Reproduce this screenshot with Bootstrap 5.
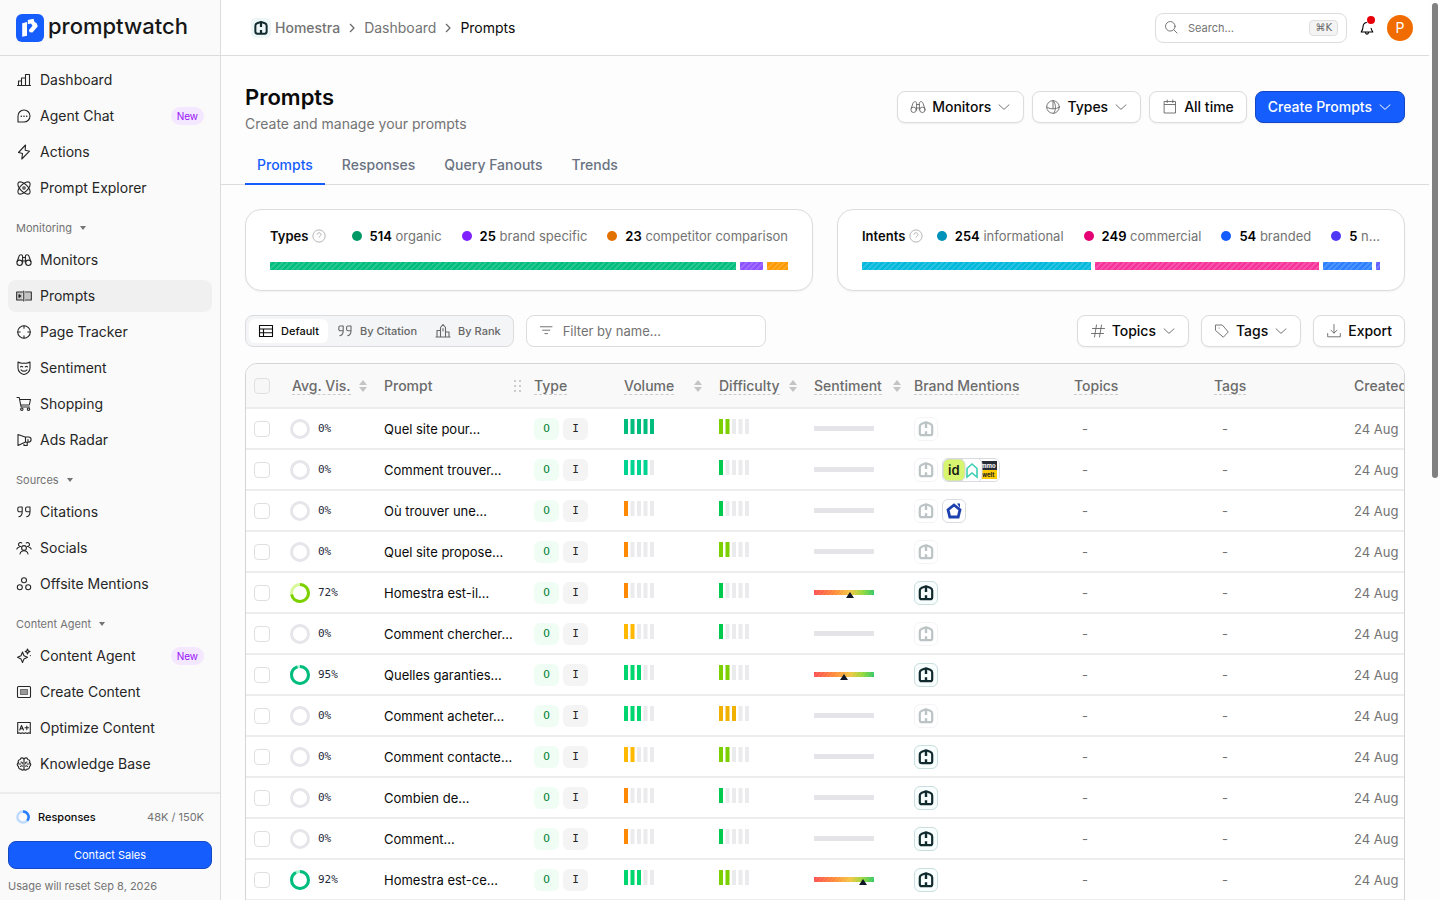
<!DOCTYPE html>
<html lang="en">
<head>
<meta charset="utf-8">
<meta name="viewport" content="width=device-width, initial-scale=1">
<title>Prompts - promptwatch</title>
<link href="https://cdn.jsdelivr.net/npm/bootstrap@5.3.0/dist/css/bootstrap.min.css" rel="stylesheet">
<style>
  :root { --line:#dcdcde; --muted:#737373; --ink:#0a0a0a; --blue:#155dfc; }
  body { font-family: Inter, "Liberation Sans", sans-serif; font-size:14px; line-height:20px; color:var(--ink); background:#fdfdfd; }
  a { text-decoration:none; color:inherit; }
  svg { flex:none; }
  .ico { width:16px; height:16px; fill:none; stroke:currentColor; stroke-width:1.1; stroke-linejoin:round; stroke-linecap:round; }
  .muted { color:var(--muted); }

  .sidebar { width:221px; background:#fafafa; border-right:1px solid var(--line); }
  .brandbar { height:56px; border-bottom:1px solid var(--line); }
  .wordmark { font-size:22px; line-height:24px; font-weight:500; color:#171717; padding-bottom:4px; }
  .side-link { display:flex; align-items:center; gap:8px; height:32px; padding:0 8px; border-radius:8px; color:#262626; }
  .side-link.active { background:#f0f0f0; }
  .side-head { height:32px; margin-top:4px; margin-bottom:-4px; padding:0 8px; font-size:11px; color:var(--muted); border:0; background:none; text-align:left; }
  .tag-new { font-size:10px; line-height:18px; padding:0 6px; border-radius:9px; background:#f3e8ff; color:#9810fa; }
  .side-foot { border-top:2px solid #ececec; padding:13px 8px 4px; font-size:11px; }
  .btn-main { --bs-btn-bg:var(--blue); --bs-btn-color:#fff; --bs-btn-border-color:#1447c4; --bs-btn-hover-bg:#1447e6; --bs-btn-hover-color:#fff; }
  .btn-sales { height:28px; margin:14px 0 7px; font-size:11px; line-height:16px; padding:0; border-radius:8px; }

  .topbar { height:56px; border-bottom:1px solid var(--line); background:#fff; padding-left:30px; padding-right:16px; }
  .crumbs { gap:7px; }
  .search-box { width:192px; height:30px; border:1px solid var(--line); border-radius:8px; padding:0 8px; background:#fff; }
  .search-box input, .filter-box input { border:0; outline:0; background:none; min-width:0; padding:0; }
  .search-box input { font-size:11px; }
  .filter-box input { font-size:13px; }
  input::placeholder { color:var(--muted); opacity:1; }
  .keycap { font:10px/14px "DejaVu Sans", sans-serif; color:#666; background:#f4f4f4; border:1px solid #dedede; border-radius:4px; padding:0 5px; }
  .bell { position:relative; border:0; background:none; padding:0; width:16px; height:16px; display:flex; }
  .bell i { position:absolute; right:0; top:-4px; width:8px; height:8px; border-radius:50%; background:#e7000b; }
  .avatar { width:26px; height:26px; border-radius:50%; border:0; background:#f06c00; color:#fff; font-size:14px; padding:0; }

  .page-title { font-size:22px; line-height:34px; font-weight:600; margin:0; }
  .tool { display:inline-flex; align-items:center; gap:6px; height:32px; padding:0 12px; font-size:14px; line-height:20px; font-weight:500; border-radius:8px; box-shadow:0 1px 2px #0000000f; white-space:nowrap; }
  .tool .chev { width:14px; stroke-width:1; }
  .tool-plain { --bs-btn-bg:#fff; --bs-btn-color:var(--ink); --bs-btn-border-color:var(--line); --bs-btn-hover-bg:#f7f7f7; --bs-btn-hover-border-color:var(--line); }
  .tool-plain .ico { color:#666; stroke-width:.9; }

  .tabs-line { border-bottom:1px solid var(--line); padding:0 24px; gap:5px; }
  .tab-link { padding:5px 12px 8px; margin-bottom:-1px; font-weight:500; color:#6a7282; border-bottom:2px solid transparent; }
  .tab-link.active { color:var(--blue); border-color:var(--blue); }

  .stat { height:82px; padding:16px 24px; background:#fff; border:1px solid var(--line); border-radius:16px; box-shadow:0 1px 2px #0000000d; }
  .legend { gap:20px; min-width:0; font-size:13px; }
  .legend li { display:flex; align-items:center; gap:8px; flex:none; white-space:nowrap; }
  .legend li:last-child { flex:0 1 auto; min-width:0; }
  .legend b, .stat h2 { font-weight:600; }
  .stat h2 { font-size:13px; line-height:20px; margin:0; }
  .dot { width:10px; height:10px; border-radius:50%; flex:none; }
  .seg { height:8px; flex-basis:0; background-image:repeating-linear-gradient(135deg,#ffffff26 0 2px,transparent 2px 4px); }

  .tool-row { gap:12px; }
  .switcher { background:#f4f5f7; border:1px solid var(--line); border-radius:8px; height:32px; padding:3px; }
  .switcher button { display:flex; align-items:center; gap:7px; height:24px; border:0; border-radius:6px; background:none; color:#666; font-size:11px; font-weight:500; padding:0 9px; }
  .switcher button.active { background:#fff; color:#0a0a0a; }
  .filter-box { width:240px; height:32px; background:#fff; border:1px solid var(--line); border-radius:8px; padding:0 12px; }

  .grid-wrap { border:1px solid #d4d4d8; border-radius:12px 12px 0 0; overflow:hidden; background:#fff; }
  .grid { table-layout:fixed; width:100%; min-width:1200px; margin:0; border-collapse:separate; border-spacing:0; }
  .grid th, .grid td { padding:0 8px; border-bottom:2px solid #ededed; white-space:nowrap; vertical-align:middle; }
  .grid th { height:45px; background:#f9f9f9; font-weight:500; color:#6b6b6b; }
  .grid td { height:41px; font-size:13px; }
  .grid .c-check { width:36px; padding-right:0; } .grid .c-vis { width:94px; } .grid .c-prompt { width:150px; } .grid .c-type { width:90px; }
  .grid .c-bars { width:95px; } .grid .c-sent { width:100px; } .grid .c-brand { width:160px; } .grid .c-wide { width:140px; }
  .grid .c-vis { padding-left:10px; }
  .grid .hint { border-bottom:1px dashed #ccc; line-height:17px; }
  .grid .form-check-input { display:block; width:16px; height:16px; margin:0; border:1px solid #dfdfe2; border-radius:4px; background-color:#fff; }
  .grid th .form-check-input { background-color:#f7f7f7; }
  .pct { font:11px/16px "DejaVu Sans Mono", monospace; color:#1e2939; }
  .clip { overflow:hidden; text-overflow:ellipsis; }
  .pill { display:flex; align-items:center; justify-content:center; width:25px; height:22px; border-radius:6px; font:11px/16px "DejaVu Sans Mono", monospace; }
  .pill-o { background:#f0fdf4; color:#008236; } .pill-i { background:#f4f4f5; color:#262626; }
  .bars { display:block; margin-bottom:4px; }
  .logo-box { display:flex; align-items:center; height:24px; min-width:24px; border:1px solid #d9dbe0; border-radius:6px; background:#fff; overflow:hidden; }
  .logo-box.off { opacity:.28; }
  .logo-box.own { border-color:#c9dedd; background:#f8fdfd; }
  .rail { width:11px; background:#fdfdfd; padding:3px 2px 0 3px; }
  .rail div { height:53%; width:6px; border-radius:3px; background:#808080; }
</style>
</head>
<body>
<svg width="0" height="0" class="position-absolute" aria-hidden="true">
  <symbol id="i-chart" viewBox="0 0 16 16"><path d="M1.500 13.500h13M2.500 13.500V9h3v4.500M5.500 13.500V6h4v7.500M9.500 13.500V2.500h4v11"/></symbol>
  <symbol id="i-chat" viewBox="0 0 16 16"><path d="M2 14V8a6 6 0 1 1 6 6z"/><path d="M5.200 8.200h.2M7.900 8.200h.2M10.600 8.200h.2" stroke-width="1.4"/></symbol>
  <symbol id="i-bolt" viewBox="0 0 16 16"><path d="M9.500 1 2.500 8.500 6.500 9.500 5.800 15 13.500 7.200 9.200 6.200z"/></symbol>
  <symbol id="i-atom" viewBox="0 0 16 16"><ellipse cx="8" cy="8" rx="7.800" ry="3.800" transform="rotate(45 8 8)"/><ellipse cx="8" cy="8" rx="7.800" ry="3.800" transform="rotate(-45 8 8)"/><circle cx="8" cy="8" r="1.200"/></symbol>
  <symbol id="i-bino" viewBox="0 0 16 16"><circle cx="3.600" cy="10.800" r="2.700"/><circle cx="12.400" cy="10.800" r="2.700"/><path d="M1.200 9.500 3 4.200C3.500 2.200 6.600 2.200 6.600 4.200V11M14.800 9.500 13 4.200C12.500 2.200 9.400 2.200 9.400 4.200V11M6.600 5.500h2.800M6.600 9h2.800"/></symbol>
  <symbol id="i-prompt" viewBox="0 0 16 16"><path d="M6.500 4H.700v8h5.800M9.500 4h5.800v8H9.500"/><path d="M1.500 4.500h5v7h-5zM9 5h5.500v6H9z" fill="currentColor" fill-opacity=".22" stroke="none"/><path d="M7.800 3v10M3 6.700l1.800 1.300L3 9.300z"/></symbol>
  <symbol id="i-target" viewBox="0 0 16 16"><circle cx="8" cy="8" r="6.300"/><path d="M8 1.700v2.500M8 11.800v2.500M1.700 8h2.500M11.800 8h2.500"/></symbol>
  <symbol id="i-mask" viewBox="0 0 16 16"><path d="M2 2c2 1.200 4 1.500 6 1 2 .5 4 .2 6-1V8c0 3.500-3 6-6 6.500C5 14 2 11.500 2 8zM4.500 6.800c.7-.6 1.500-.6 2.200 0M9.300 6.800c.7-.6 1.500-.6 2.200 0M5 9.800c1.800 1.800 4.200 1.800 6 0"/></symbol>
  <symbol id="i-cart" viewBox="0 0 16 16"><path d="M1 1.500h2.200l1.900 9.500h8.400M3.700 3.500H14.500l-1.200 5.500H4.800"/><circle cx="5.800" cy="13.200" r="1.200"/><circle cx="12.500" cy="13.200" r="1.200"/></symbol>
  <symbol id="i-mega" viewBox="0 0 16 16"><path d="M2 2.500 9 5h3.500a2.500 2.500 0 0 1 0 5.200H9l-7 3.300zM9.500 5v5.200M8 10.700v2.800h3.200v-3.300M12 7.500v2.700"/></symbol>
  <symbol id="i-quote" viewBox="0 0 16 16"><path d="M6.200 7.800H3.300A1.500 1.500 0 0 1 1.800 6.300V4.500A1.500 1.500 0 0 1 3.300 3h2.900zM6.200 7.800c0 3-1.500 4.600-3.400 4.900M14 7.800h-2.900a1.500 1.500 0 0 1-1.500-1.500V4.500A1.500 1.500 0 0 1 11.100 3H14zM14 7.800c0 3-1.500 4.600-3.400 4.900"/></symbol>
  <symbol id="i-people" viewBox="0 0 16 16"><circle cx="8" cy="8" r="2.400"/><path d="M4 14c.5-2.200 2-3.200 4-3.200s3.500 1 4 3.200M4.800 6.500A2 2 0 1 1 5.800 3M11.200 6.500A2 2 0 1 0 10.200 3M3.700 6.700C2.300 7 1.300 7.700.8 9M12.300 6.700c1.400.3 2.400 1 2.900 2.300"/></symbol>
  <symbol id="i-three" viewBox="0 0 16 16"><circle cx="8" cy="4.200" r="2.500"/><circle cx="3.800" cy="11.300" r="2.500"/><circle cx="12.200" cy="11.300" r="2.500"/></symbol>
  <symbol id="i-spark" viewBox="0 0 16 16"><path d="M6.500 4 8 7.800l3.500 1.500L8 10.900l-1.500 3.600L5 10.900 1.500 9.300 5 7.800zM11.500 1l.7 1.800 1.800.7-1.800.8-.7 1.700-.7-1.700L9.200 3.500l1.600-.7zM14.400 7.500v.1"/></symbol>
  <symbol id="i-doc" viewBox="0 0 16 16"><rect x="1.500" y="2.500" width="13" height="11" rx="1"/><path d="M4.500 5.500h7v5h-7z" fill="currentColor" fill-opacity=".45" stroke-opacity=".55"/></symbol>
  <symbol id="i-grade" viewBox="0 0 16 16"><path d="M1.700 13.500v-11h12.600v11l-1.500-.8-1.500.8-1.600-.8-1.700.8-1.600-.8-1.600.8-1.600-.8zM3.800 10l1.700-4.500L7.500 10M4.500 8.700h2.400M9 7.800h3.600M10.800 6v3.600"/></symbol>
  <symbol id="i-brain" viewBox="0 0 16 16"><path d="M8 3.200C7.300 1.300 4.500 1.500 4.300 3.500 2.300 3.600 1.800 5.600 2.600 6.500.8 7.400.8 9.800 2.500 10.400c-.2 2 1.300 3 2.500 2.700.7 1.500 2.700 1.300 3-.3zM8 3.200c.7-1.900 3.500-1.700 3.700.3 2 .1 2.500 2.100 1.700 3 1.800.9 1.800 3.300.1 3.900.2 2-1.300 3-2.500 2.700-.7 1.500-2.700 1.300-3-.3M5 6c1 0 1.500.7 1.300 1.600M11 6c-1 0-1.500.7-1.300 1.600M4.500 10.300c.8-.7 1.500-.7 2.100-.2M11.500 10.300c-.8-.7-1.500-.7-2.100-.2M2.700 8h2M13.300 8h-2"/></symbol>
  <symbol id="i-down" viewBox="0 0 14 16"><path d="M2 5.800l5 4.600 5-4.600"/></symbol>
  <symbol id="i-globe" viewBox="0 0 16 16"><circle cx="8" cy="8" r="6.300"/><path d="M8 1.700v8M8 1.700c3.200 2.500 3.200 9.500.8 12.600M1.700 8c2 2.200 9.500 2.700 12.600 0"/></symbol>
  <symbol id="i-cal" viewBox="0 0 16 16"><path d="M2.500 2.500h11v11.500h-11zM2.500 5.500h11M5.200 1v2.500M10.800 1v2.500"/></symbol>
  <symbol id="i-search" viewBox="0 0 16 16"><circle cx="7" cy="7" r="5.300"/><path d="m11 11 3.500 3.500"/></symbol>
  <symbol id="i-bell" viewBox="0 0 16 16"><path d="M7.500 2.500C5 3 4 5 4 7c0 2.300-.6 3.300-1.800 5h11.600c-.9-1.300-1.500-2.200-1.700-3.700M6.500 12.200c0 2.500 3 2.500 3 0"/></symbol>
  <symbol id="i-help" viewBox="0 0 16 16"><circle cx="8" cy="8" r="7"/><path d="M5.800 6.500c0-3 4.500-2.800 4.500-.2C10.300 8 8 8 8 9.800M8 11.800v.2"/></symbol>
  <symbol id="i-table" viewBox="0 0 16 16"><path d="M1.500 2.500h13v11h-13zM1.500 6h13M1.500 9.700h13M5.500 6v7.500"/></symbol>
  <symbol id="i-rank" viewBox="0 0 16 16"><path d="M1 14h14M2 14V7.500h3.500V14M5.500 14V4.500L8 1.500l2.500 3V14M10.500 9H14v5M8 5.500V8"/></symbol>
  <symbol id="i-filter" viewBox="0 0 16 16"><path d="M1.500 4.200h13M4 8h8M6.500 11.800h3"/></symbol>
  <symbol id="i-hash" viewBox="0 0 16 16"><path d="M6.500 2 4.500 14M11.500 2l-2 12M2.500 5.500h12M1.500 10.500h12"/></symbol>
  <symbol id="i-tag" viewBox="0 0 16 16"><path d="M1.800 2h6.500l6 7-5 5.200-7.500-6.500zM5 5v.1"/></symbol>
  <symbol id="i-export" viewBox="0 0 16 16"><path d="M1.700 10.500v3.300h12.600v-3.300M8 1.500V10M5 7.300 8 10l3-2.700"/></symbol>
  <symbol id="i-sort" viewBox="0 0 10 12"><path d="M5 0l4 5H1zM5 12l4-5H1z" fill="#c4c4c4"/></symbol>
  <symbol id="i-home" viewBox="0 0 22 22"><path d="M11 4.300 6.800 5.800Q4.800 6.600 4.800 8.500v6.700q0 2 2 2h8.400q2 0 2-2V8.500q0-1.900-2-2.700z" fill="none" stroke="#102a2e" stroke-width="2.200" stroke-linejoin="round"/><path d="M11 4v6M11 13.200V17" fill="none" stroke="#102a2e" stroke-width="2.400"/></symbol>
</svg>

<div class="d-flex vh-100 overflow-hidden">
  <aside class="sidebar d-flex flex-column flex-shrink-0">
    <a href="#" class="brandbar d-flex align-items-center gap-1 px-3 flex-shrink-0">
      <svg width="28" height="28" viewBox="0 0 28 28"><rect width="28" height="28" rx="6" fill="#155dfc"/><path d="M6.200 9.300 11 8v13.700l-4.800 1.100z" fill="#fff"/><path d="M11.800 6 17.500 4.800l1 3.200 2 1 1.300 3.200-5.300 6.300-2.800-.3-.9-2 3.700-4.500-1.500-2.300-3.200.8z" fill="#fff"/></svg>
      <span class="wordmark">promptwatch</span>
    </a>
    <nav class="d-flex flex-column gap-1 p-2 flex-grow-1 overflow-hidden" id="sideNav" aria-label="Main"></nav>
    <div class="side-foot">
      <div class="d-flex align-items-center justify-content-between px-2">
        <span class="d-flex align-items-center gap-2 fw-medium"><svg width="14" height="14" viewBox="0 0 14 14" fill="none" stroke-width="2.500"><circle cx="7" cy="7" r="5.600" stroke="#bedbff"/><path d="M7 1.400A5.600 5.600 0 0 1 11.200 10.700" stroke="#2b7fff"/></svg>Responses</span>
        <span class="muted">48K / 150K</span>
      </div>
      <button class="btn btn-main btn-sales w-100" type="button">Contact Sales</button>
      <div class="muted text-nowrap">Usage will reset Sep 8, 2026</div>
    </div>
  </aside>

  <div class="flex-grow-1 overflow-hidden d-flex flex-column">
    <header class="topbar d-flex align-items-center justify-content-between flex-shrink-0">
      <nav class="crumbs d-flex align-items-center" aria-label="Breadcrumb">
        <a href="#" class="d-flex align-items-center fw-medium muted gap-1"><svg width="20" height="20" viewBox="0 0 22 22"><rect width="22" height="22" rx="5" fill="#eef7f7"/><use href="#i-home"/></svg>Homestra</a>
        <svg width="10" height="12" viewBox="0 0 10 12" fill="none" stroke="#666" stroke-width="1.200"><path d="m3 2 4 4-4 4"/></svg>
        <a href="#" class="muted">Dashboard</a>
        <svg width="10" height="12" viewBox="0 0 10 12" fill="none" stroke="#666" stroke-width="1.200"><path d="m3 2 4 4-4 4"/></svg>
        <span aria-current="page">Prompts</span>
      </nav>
      <div class="tool-row d-flex align-items-center">
        <label class="search-box d-flex align-items-center gap-1">
          <svg class="ico muted me-1"><use href="#i-search" transform="scale(.9)"/></svg>
          <input class="flex-grow-1" type="search" placeholder="Search…" aria-label="Search"><kbd class="keycap">⌘K</kbd>
        </label>
        <div class="tool-row d-flex align-items-center"><button class="bell" type="button" aria-label="Notifications"><svg class="ico"><use href="#i-bell"/></svg><i></i></button>
        <button class="avatar" type="button">P</button></div>
      </div>
    </header>

    <main class="flex-grow-1 overflow-hidden">
      <div class="d-flex align-items-center justify-content-between px-4 pt-4">
        <div><h1 class="page-title">Prompts</h1><p class="muted mb-0">Create and manage your prompts</p></div>
        <div class="d-flex gap-2">
          <button class="btn tool tool-plain" type="button"><svg class="ico"><use href="#i-bino"/></svg>Monitors<svg class="ico chev"><use href="#i-down"/></svg></button>
          <button class="btn tool tool-plain" type="button"><svg class="ico"><use href="#i-globe"/></svg>Types<svg class="ico chev"><use href="#i-down"/></svg></button>
          <button class="btn tool tool-plain" type="button"><svg class="ico"><use href="#i-cal"/></svg>All time</button>
          <button class="btn tool btn-main" type="button">Create Prompts<svg class="ico chev"><use href="#i-down"/></svg></button>
        </div>
      </div>
      <nav class="tabs-line d-flex mt-3" aria-label="Views">
        <a class="tab-link active" href="#">Prompts</a><a class="tab-link" href="#">Responses</a><a class="tab-link" href="#">Query Fanouts</a><a class="tab-link" href="#">Trends</a>
      </nav>

      <div class="p-4">
        <div class="row gx-4 mb-4" id="stats"></div>

        <div class="d-flex justify-content-between mb-3">
          <div class="tool-row d-flex">
            <div class="switcher d-flex" role="group" aria-label="Grouping">
              <button class="active" type="button"><svg class="ico"><use href="#i-table"/></svg>Default</button>
              <button type="button"><svg class="ico"><use href="#i-quote"/></svg>By Citation</button>
              <button type="button"><svg class="ico"><use href="#i-rank"/></svg>By Rank</button>
            </div>
            <label class="filter-box d-flex align-items-center gap-2"><svg class="ico muted"><use href="#i-filter" transform="scale(.9)"/></svg><input class="flex-grow-1" type="text" placeholder="Filter by name…" aria-label="Filter by name"></label>
          </div>
          <div class="tool-row d-flex">
            <button class="btn tool tool-plain" type="button"><svg class="ico"><use href="#i-hash"/></svg>Topics<svg class="ico chev"><use href="#i-down"/></svg></button>
            <button class="btn tool tool-plain" type="button"><svg class="ico"><use href="#i-tag"/></svg>Tags<svg class="ico chev"><use href="#i-down"/></svg></button>
            <button class="btn tool tool-plain" type="button"><svg class="ico"><use href="#i-export"/></svg>Export</button>
          </div>
        </div>

        <div class="grid-wrap">
          <table class="grid">
            <thead><tr>
              <th class="c-check"><input class="form-check-input" type="checkbox" aria-label="Select all"></th>
              <th class="c-vis"><div class="d-flex align-items-center justify-content-between"><span class="hint">Avg. Vis.</span><svg width="10" height="12"><use href="#i-sort"/></svg></div></th>
              <th class="c-prompt pe-1"><div class="d-flex align-items-center justify-content-between">Prompt<svg width="8" height="12" fill="#ccc"><path d="M0 0h2v2H0zM5 0h2v2H5zM0 5h2v2H0zM5 5h2v2H5zM0 10h2v2H0zM5 10h2v2H5z"/></svg></div></th>
              <th class="c-type"><span class="hint">Type</span></th>
              <th class="c-bars"><div class="d-flex align-items-center justify-content-between"><span class="hint">Volume</span><svg width="10" height="12"><use href="#i-sort"/></svg></div></th>
              <th class="c-bars"><div class="d-flex align-items-center justify-content-between"><span class="hint">Difficulty</span><svg width="10" height="12"><use href="#i-sort"/></svg></div></th>
              <th class="c-sent pe-1"><div class="d-flex align-items-center justify-content-between"><span class="hint">Sentiment</span><svg width="10" height="12"><use href="#i-sort"/></svg></div></th>
              <th class="c-brand"><span class="hint">Brand Mentions</span></th>
              <th class="c-wide"><span class="hint">Topics</span></th>
              <th class="c-wide"><span class="hint">Tags</span></th>
              <th>Created</th>
            </tr></thead>
            <tbody id="rows"></tbody>
          </table>
        </div>
      </div>
    </main>
  </div>
  <div class="rail flex-shrink-0" aria-hidden="true"><div></div></div>
</div>

<script>
const nav = [
  ['chart','Dashboard'],['chat','Agent Chat','New'],['bolt','Actions'],['atom','Prompt Explorer'],
  'Monitoring',['bino','Monitors'],['prompt','Prompts'],['target','Page Tracker'],['mask','Sentiment'],['cart','Shopping'],['mega','Ads Radar'],
  'Sources',['quote','Citations'],['people','Socials'],['three','Offsite Mentions'],
  'Content Agent',['spark','Content Agent','New'],['doc','Create Content'],['grade','Optimize Content'],['brain','Knowledge Base']
];
document.getElementById('sideNav').innerHTML = nav.map(n => typeof n === 'string'
  ? `<button type="button" class="side-head d-flex align-items-center gap-1 flex-shrink-0">${n}<svg class="ms-1" width="6" height="4"><path d="M0 0h6L3 4z" fill="#737373"/></svg></button>`
  : `<a href="#" class="side-link flex-shrink-0${n[1] === 'Prompts' ? ' active' : ''}"><svg class="ico"><use href="#i-${n[0]}"/></svg>${n[1]}${n[2] ? `<span class="tag-new ms-auto">${n[2]}</span>` : ''}</a>`).join('');

const stats = [
  ['Types', [[514,'organic','#009966','#00bc7d'],[25,'brand specific','#7f22fe','#8e51ff'],[23,'competitor comparison','#e17100','#fe9a00']]],
  ['Intents', [[254,'informational','#0092b8','#00b8db'],[249,'commercial','#e60076','#f6339a'],[54,'branded','#155dfc','#2b7fff'],[5,'n…','#4f39f6','#615fff']]]
];
document.getElementById('stats').innerHTML = stats.map(([t, items]) => `<div class="col-6"><section class="stat">
  <div class="d-flex align-items-center justify-content-between gap-2 mb-3">
    <div class="d-flex align-items-center flex-shrink-0"><h2>${t}</h2><svg class="ms-1" width="14" height="14" fill="none" stroke="#aaa"><use href="#i-help"/></svg></div>
    <ul class="legend list-unstyled d-flex mb-0">${items.map(i => `<li><span class="dot" style="background:${i[2]}"></span><span class="muted text-truncate"><b class="text-black">${i[0]}</b> ${i[1]}</span></li>`).join('')}</ul>
  </div>
  <div class="d-flex gap-1">${items.map(i => `<div class="seg" style="flex-grow:${i[0]};background-color:${i[3]}"></div>`).join('')}</div>
</section></div>`).join('');

/* visibility, prompt, volume, difficulty, sentiment marker, own brand mentioned, competitor logos */
const data = [
  [0,'Quel site pour…',5,2,0,0],[0,'Comment trouver…',4,1,0,0,'multi'],[0,'Où trouver une…',1,1,0,0,'single'],[0,'Quel site propose…',1,2,0,0],
  [72,'Homestra est-il…',1,1,36,1],[0,'Comment chercher…',2,1,0,0],[95,'Quelles garanties…',3,2,30,1],[0,'Comment acheter…',3,3,0,0],
  [0,'Comment contacte…',2,2,0,1],[0,'Combien de…',1,1,0,1],[0,'Comment…',1,1,0,1],[92,'Homestra est-ce…',3,2,49,1]
];
const volC = ['','#ff8904','#ffb900','#00d66f','#00d492','#00bc7d'], difC = ['','#00c950','#7ccf00','#f0b100'];
const bars = (n, c) => `<svg class="bars" width="31" height="15">${[0,1,2,3,4].map(k => `<rect x="${k*6.5}" width="4" height="15" fill="${k < n ? c : '#ebebee'}"/>`).join('')}</svg>`;
const ring = v => { const c = v > 90 ? ['#00bc7d','#a4f4cf'] : ['#7ccf00','#d8f999'];
  return `<svg width="20" height="20" viewBox="0 0 20 20" fill="none" stroke-width="3"><circle cx="10" cy="10" r="8.500" stroke="${v ? c[1] : '#e5e5ea'}"/>${v ? `<circle cx="10" cy="10" r="8.500" stroke="${c[0]}" pathLength="100" stroke-dasharray="${v} 100" transform="rotate(-90 10 10)"/>` : ''}</svg>`; };
const sent = m => `<svg class="d-block" width="60" height="13">${m
  ? `<defs><linearGradient id="heat${m}"><stop stop-color="#fb5050"/><stop offset=".35" stop-color="#ff8c3a"/><stop offset=".6" stop-color="#f5c542"/><stop offset=".8" stop-color="#9ad83a"/><stop offset="1" stop-color="#31c965"/></linearGradient></defs><rect y="4" width="60" height="5" fill="url(#heat${m})"/><path d="${Array.from({length:15}, (_, k) => `M${k*4} 9l4-5`).join('')}" stroke="#fff" stroke-opacity=".15"/><path d="M${m} 6l4 6h-8z" fill="#101828"/>`
  : '<rect y="4" width="60" height="5" fill="#e5e5e9"/>'}</svg>`;
const extra = {
  multi: `<div class="logo-box"><svg width="56" height="22"><rect width="56" height="22" fill="#fff"/><path d="M37 2h17v9H37z" fill="#262c36"/><path d="M37 11h17v9H37z" fill="#fecb00"/><text x="38" y="9" font-size="6" font-weight="700" fill="#fff">mmo</text><text x="39" y="18" font-size="6" font-weight="700" fill="#222">welt</text><rect x="17" y="-1" width="22" height="24" rx="6" fill="#fff" stroke="#ddd"/><path d="M24 18V9.500l5-4.500 5 4.500V18l-5-4z" fill="none" stroke="#3ccfb4" stroke-width="1.600"/><rect x="0" y="0" width="22" height="22" rx="6" fill="#d8f56f" stroke="#d2d5da"/><text x="5" y="16" font-size="13" font-weight="600" fill="#172016">id</text></svg></div>`,
  single: `<div class="logo-box"><svg width="22" height="22"><path d="M11 5 17 9.700 15.200 17H6.800L5 9.700z" fill="none" stroke="#1e40af" stroke-width="2.800"/><path d="M14 3.500h3V8" fill="#1e40af"/></svg></div>`
};
document.getElementById('rows').innerHTML = data.map(([v, p, vol, dif, m, own, ex]) => `<tr>
  <td class="c-check"><input class="form-check-input" type="checkbox" aria-label="Select ${p}"></td>
  <td><div class="d-flex align-items-center gap-2">${ring(v)}<span class="pct">${v}%</span></div></td>
  <td class="clip">${p}</td>
  <td><div class="d-flex gap-1"><span class="pill pill-o">O</span><span class="pill pill-i">I</span></div></td>
  <td>${bars(vol, volC[vol])}</td><td>${bars(dif, difC[dif])}</td><td>${sent(m)}</td>
  <td><div class="d-flex gap-1"><div class="logo-box ${own ? 'own' : 'off'}"><svg width="22" height="22"><use href="#i-home"/></svg></div>${ex ? extra[ex] : ''}</div></td>
  <td class="muted"><span class="ps-2">-</span></td><td class="muted"><span class="ps-2">-</span></td><td class="muted">24 Aug</td></tr>`).join('');
</script>
<script src="https://cdn.jsdelivr.net/npm/bootstrap@5.3.0/dist/js/bootstrap.bundle.min.js"></script>
</body>
</html>
